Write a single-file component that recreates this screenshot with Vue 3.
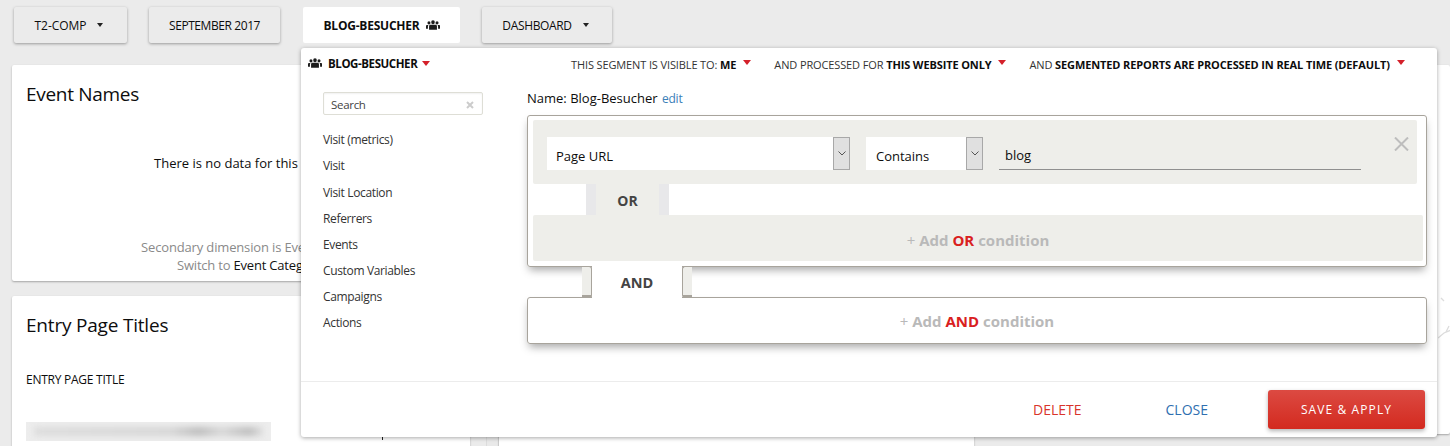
<script setup>
const categories = ['Visit (metrics)', 'Visit', 'Visit Location', 'Referrers', 'Events', 'Custom Variables', 'Campaigns', 'Actions']
</script>

<template>
  <div class="page">
    <nav class="topbar">
      <div class="nav-btn w-site">T2-COMP <span class="caret"></span></div>
      <div class="nav-btn w-date">SEPTEMBER 2017</div>
      <div class="nav-btn w-seg active">
        BLOG-BESUCHER
        <svg class="people" viewBox="0 0 16 11"><path d="M8 0a2 2 0 0 1 2 2.2A2 2 0 0 1 8 4.6a2 2 0 0 1-2-2.4A2 2 0 0 1 8 0zM3.4 1.2a1.7 1.7 0 0 1 1.7 1.8c0 1-.7 1.9-1.7 1.9S1.7 4 1.7 3a1.7 1.7 0 0 1 1.7-1.8zm9.2 0A1.7 1.7 0 0 1 14.3 3c0 1-.7 1.9-1.7 1.9S10.900 4 10.900 3a1.700 1.700 0 0 1 1.700-1.800zM5 5.200h6c1 0 1.500.8 1.500 1.800V11h-9V7c0-1 .5-1.800 1.500-1.800zM0 6.500c0-.6.500-1 1-1h1.800c-.4.400-.6 1-.6 1.600V9.800H0zm16 0c0-.6-.5-1-1-1h-1.800c.4.400.6 1 .6 1.600V9.800H16z"/></svg>
      </div>
      <div class="nav-btn w-dash">DASHBOARD <span class="caret"></span></div>
    </nav>

    <div class="columns">
      <div class="col col-left">
        <section class="card card-events">
          <h2>Event Names</h2>
          <p class="nodata">There is no data for this report.</p>
          <p class="secondary">Secondary dimension is Event Action.</p>
          <p class="secondary">Switch to <span class="dark">Event Category</span></p>
        </section>
        <section class="card card-entry">
          <h2>Entry Page Titles</h2>
          <div class="th">ENTRY PAGE TITLE</div>
          <div class="row">
            <div class="blur"><div class="blur-ink"></div></div>
            <span class="peek"></span>
          </div>
        </section>
      </div>
      <div class="gutter"></div>
      <div class="col col-mid"><section class="card card-mid"></section></div>
      <div class="col col-right">
        <section class="card card-right">
          <svg class="chart-bit" viewBox="0 0 14 42"><path d="M3 1l3 3M0 41l6-5 7-3M8 35l3-6"/></svg>
        </section>
      </div>
    </div>

    <div class="popup">
      <header class="pop-head">
        <div class="seg-title">
          <svg class="people" viewBox="0 0 16 11"><path d="M8 0a2 2 0 0 1 2 2.2A2 2 0 0 1 8 4.6a2 2 0 0 1-2-2.4A2 2 0 0 1 8 0zM3.4 1.2a1.7 1.7 0 0 1 1.7 1.8c0 1-.7 1.9-1.7 1.9S1.7 4 1.7 3a1.7 1.7 0 0 1 1.7-1.8zm9.2 0A1.7 1.7 0 0 1 14.3 3c0 1-.7 1.9-1.7 1.9S10.900 4 10.900 3a1.700 1.700 0 0 1 1.700-1.800zM5 5.200h6c1 0 1.500.8 1.500 1.800V11h-9V7c0-1 .5-1.800 1.500-1.800zM0 6.500c0-.6.500-1 1-1h1.800c-.4.400-.6 1-.6 1.600V9.800H0zm16 0c0-.6-.5-1-1-1h-1.800c.4.400.6 1 .6 1.600V9.800H16z"/></svg>
          <b>BLOG-BESUCHER</b>
          <span class="red-caret"></span>
        </div>
        <div class="seg-opts">
          <span class="opt">THIS SEGMENT IS VISIBLE TO: <b>ME</b><i class="red-caret up"></i></span>
          <span class="opt">AND PROCESSED FOR <b>THIS WEBSITE ONLY</b><i class="red-caret up"></i></span>
          <span class="opt">AND <b>SEGMENTED REPORTS ARE PROCESSED IN REAL TIME (DEFAULT)</b><i class="red-caret up"></i></span>
        </div>
      </header>

      <div class="pop-body">
        <aside class="side">
          <div class="search">
            <span>Search</span>
            <svg class="search-x" viewBox="0 0 8 8"><path d="M1 1l6 6M7 1L1 7"/></svg>
          </div>
          <ul class="cats">
            <li v-for="c in categories" :key="c">{{ c }}</li>
          </ul>
        </aside>

        <main class="editor">
          <div class="name">Name: Blog-Besucher <a class="edit">edit</a></div>

          <div class="box or-box">
            <div class="cond">
              <div class="select sel-name"><span class="sel-text">Page URL</span><span class="arrow"><svg viewBox="0 0 8 5"><path d="M.5.5L4 4 7.500.5"/></svg></span></div>
              <div class="select sel-op"><span class="sel-text">Contains</span><span class="arrow"><svg viewBox="0 0 8 5"><path d="M.5.5L4 4 7.500.5"/></svg></span></div>
              <div class="value">blog</div>
              <svg class="del" viewBox="0 0 15 14"><path d="M1 .5l13 13M14 .5l-13 13"/></svg>
            </div>
            <div class="or-row"><div class="or-tab">OR</div></div>
            <div class="add-or"><span class="plus">+</span> Add <em>OR</em> condition</div>
          </div>

          <div class="and-row">
            <div class="and-stub left"></div>
            <div class="and-label">AND</div>
            <div class="and-stub right"></div>
          </div>

          <div class="box add-and"><span class="plus">+</span> Add <em>AND</em> condition</div>
        </main>
      </div>

      <footer class="pop-foot">
        <a class="delete">DELETE</a>
        <a class="close">CLOSE</a>
        <button class="save">SAVE &amp; APPLY</button>
      </footer>
    </div>
  </div>
</template>

<style>
html, body { margin: 0; background: #ebebeb; overflow: hidden; }
</style>

<style scoped>
.page {
  position: relative;
  width: 1450px;
  height: 446px;
  overflow: hidden;
  background: #ebebeb;
  font-family: "Open Sans", "Noto Sans", sans-serif;
  color: #0d0d0d;
}
.topbar { display: flex; gap: 22px; padding: 7px 0 0 14px; height: 36px; }
.nav-btn {
  height: 36px; box-sizing: border-box; display: flex; align-items: center; justify-content: center; gap: 6px;
  background: #ebebeb; border-radius: 2px; font-size: 12px; letter-spacing: -.35px;
  box-shadow: 0 1px 3px rgba(0,0,0,.35);
}
.w-site { width: 113px; letter-spacing: -.05px; padding-right: 3px; }
.w-date { width: 131px; letter-spacing: -.42px; margin-right: 1px; }
.w-seg { width: 157px; letter-spacing: -.22px; }
.w-dash { width: 130px; padding-right: 3px; }
.active { background: #fff; font-weight: 700; box-shadow: none; }
.caret { display: inline-block; margin-left: 5px; border: 3px solid transparent; border-top: 4px solid #222; border-bottom: 0; }
.people { width: 14px; height: 10px; fill: #1c1c1c; flex: none; }

.columns { display: flex; padding: 22px 0 0 12px; gap: 16px; }
.col-left { width: 458px; flex: none; display: flex; flex-direction: column; gap: 15px; }
.gutter { width: 13px; margin-right: -16px; margin-top: 340px; height: 60px; flex: none; box-sizing: border-box; border: 1px solid #dcdcdc; border-top: 0; background: #e9e9e9; }
.col-mid { width: 475px; margin-top: 200px; flex: none; }
.col-right { flex: 1; }
.card { background: #fff; border-radius: 2px; box-shadow: 0 1px 2px rgba(0,0,0,.3); box-sizing: border-box; }
.card h2 { margin: 0; font-weight: 400; font-size: 19px; letter-spacing: -.3px; line-height: 26px; }
.card-events { height: 216px; padding: 16px 14px 0; }
.nodata { margin: 47px 0 0; font-size: 13px; padding-left: 128px; white-space: nowrap; letter-spacing: 0; }
.secondary { margin: 0; font-size: 13px; color: #8a8a8a; padding-left: 115px; white-space: nowrap; letter-spacing: -.15px; line-height: 18px; }
.nodata + .secondary { margin-top: 66px; }
.secondary + .secondary { padding-left: 151px; letter-spacing: -.2px; }
.dark { color: #111; }
.card-entry { height: 200px; padding: 16px 14px 0; }
.card-entry h2 { letter-spacing: -.2px; }
.th { margin-top: 33px; font-size: 12px; letter-spacing: -.25px; line-height: 18px; }
.row { display: flex; margin-top: 33px; }
.blur { width: 245px; height: 19px; background: #ededed; overflow: hidden; flex: none; }
.blur-ink { margin: 5px 8px 0; height: 9px; background: linear-gradient(90deg, #dcdcdc, #d6d6d6 60%, #bcbcbc 72%, #d8d8d8 82%, #bcbcbc 94%, #e0e0e0); filter: blur(3px); }
.peek { width: 1px; height: 3px; background: #222; margin: 15px 0 0 111px; }
.card-mid { height: 300px; }
.card-right { position: relative; height: 369px; }
.chart-bit { position: absolute; left: 448px; top: 232px; width: 14px; height: 42px; fill: none; stroke: #dcdcdc; stroke-width: 1.300; }

.popup {
  position: absolute; left: 301px; top: 48px; width: 1136px; height: 389px;
  background: #fff; box-shadow: 0 1px 4px rgba(0,0,0,.35); border-radius: 3px;
  display: flex; flex-direction: column;
}
.pop-head { display: flex; height: 44px; flex: none; }
.seg-title { display: flex; align-items: center; height: 30px; padding-left: 7px; font-size: 11.500px; gap: 6px; letter-spacing: -.42px; }
.seg-title .red-caret { margin-left: -1px; }
.red-caret { display: inline-block; border: 4px solid transparent; border-top: 5px solid #d4202a; border-bottom: 0; }
.seg-opts { display: flex; position: absolute; left: 270px; top: 9px; gap: 23px; font-size: 11px; letter-spacing: -.12px; color: #333; white-space: nowrap; }
.opt b { color: #0d0d0d; }
.red-caret.up { position: relative; top: -4px; margin-left: 7px; }

.pop-body { display: flex; flex: 1; min-height: 0; }
.side { width: 160px; margin-left: 22px; flex: none; }
.search {
  display: flex; justify-content: space-between; align-items: center; box-sizing: border-box; height: 23px; padding: 2px 8px 0 7px;
  border: 1px solid #deded6; border-radius: 2px; font-size: 11.500px; letter-spacing: -.3px; color: #444;
  box-shadow: inset 0 1px 2px rgba(0,0,0,.06);
}
.search-x { width: 8px; height: 8px; stroke: #cccccc; stroke-width: 2; fill: none; }
.cats { list-style: none; margin: 12px 0 0; padding: 0; font-size: 12px; letter-spacing: -.35px; color: #333; }
.cats li { height: 26.100px; line-height: 26px; }
.cats li:nth-child(n+3) { position: relative; top: .4px; }

.editor { width: 900px; margin-left: 44px; flex: none; }
.name { font-size: 13px; line-height: 16px; height: 16px; margin: -2px 0 9px; letter-spacing: 0; }
.edit { color: #3b80b8; font-size: 12px; letter-spacing: -.2px; margin-left: 1px; }
.box { box-sizing: border-box; border: 1px solid #a8a49c; border-radius: 3px; box-shadow: 0 5px 8px -2px rgba(0,0,0,.35); }
.or-box { height: 152px; padding: 4px 3px 0 5px; }
.cond { position: relative; height: 64px; width: 884px; background: #eeeeea; border-radius: 2px; display: flex; align-items: flex-start; padding: 17px 0 0 14px; box-sizing: border-box; }
.select { display: flex; justify-content: space-between; align-items: center; height: 33px; background: #fff; font-size: 13px; box-sizing: border-box; }
.sel-text { padding-top: 5px; }
.sel-name { width: 303px; margin-right: 16px; padding-left: 9px; }
.sel-op { width: 117px; margin-right: 16px; padding-left: 10px; }
.arrow { width: 17px; height: 33px; box-sizing: border-box; border: 1px solid #a8a8a8; background: #e0e0e0; display: flex; align-items: center; justify-content: center; }
.arrow svg { width: 8px; height: 5px; stroke: #555; fill: none; stroke-width: 1; }
.value { width: 362px; height: 33px; box-sizing: border-box; border-bottom: 1px solid #8f8f8f; padding-left: 6px; font-size: 13px; line-height: 36px; }
.del { position: absolute; left: 861px; top: 17px; width: 15px; height: 14px; stroke: #bdbdbd; stroke-width: 2; fill: none; }
.or-row { height: 31px; padding-left: 53px; }
.or-tab { width: 83px; height: 31px; box-sizing: border-box; background: #eeeeea; border-left: 10px solid #e8e8ea; border-right: 10px solid #e8e8ea; text-align: center; font-weight: 700; font-size: 14px; line-height: 33px; color: #444; }
.add-or { height: 46px; background: #eeeeea; border-radius: 2px; text-align: center; font-weight: 700; font-size: 15px; line-height: 50px; color: #b9b9b9; }
em { font-style: normal; color: #d9201e; }
.plus { font-weight: 400; }
.and-row { display: flex; height: 30px; align-items: stretch; }
.and-stub { position: relative; z-index: 1; width: 10px; box-sizing: border-box; margin: 0 0 -1px; background: #eeeeea; border-bottom: 3px solid #a8a49c; }
.and-stub.left { margin-left: 55px; margin-top: -1px; border-right: 1px solid #a8a49c; border-radius: 0 3px 3px 0; border-top: 1px solid #a8a49c; }
.and-stub.right { margin-top: -1px; border-left: 1px solid #a8a49c; border-radius: 3px 0 0 3px; border-top: 1px solid #a8a49c; }
.and-label { position: relative; z-index: 1; width: 90px; margin: -1px 0; background: #fff; text-align: center; font-weight: 700; font-size: 14.500px; line-height: 33px; color: #444; }
.add-and { height: 47px; text-align: center; font-weight: 700; font-size: 15px; line-height: 47px; color: #b9b9b9; }

.pop-foot { flex: none; height: 56px; box-sizing: border-box; border-top: 1px solid #ececec; position: relative; display: flex; align-items: center; justify-content: flex-end; font-size: 14px; padding-right: 12px; }
.delete { color: #d9342b; margin-right: 84px; }
.close { color: #2f6fb0; margin-right: 60px; }
.save {
  width: 157px; height: 39px; border: 0; border-radius: 3px; color: #fff; font: inherit; font-size: 12px; letter-spacing: 1.1px;
  background: linear-gradient(#dc4a42, #d32a1f); box-shadow: 0 2px 4px rgba(0,0,0,.3);
}
</style>
